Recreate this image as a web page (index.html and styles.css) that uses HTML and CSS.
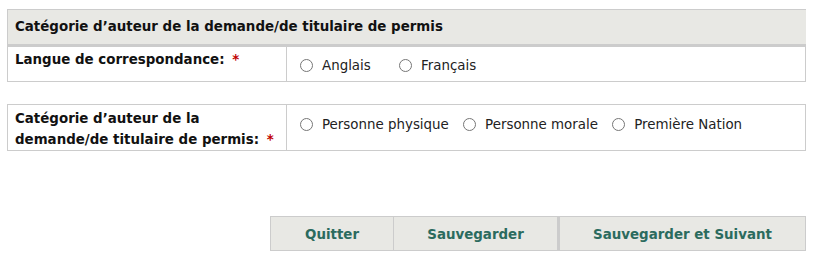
FILE: index.html
```html
<!DOCTYPE html>
<html lang="fr">
<head>
  <meta charset="UTF-8" />
  <title>Catégorie d’auteur de la demande</title>
  <link rel="stylesheet" href="styles.css">
</head>
<body>

  <div class="section-header">Catégorie d’auteur de la demande/de titulaire de permis</div>

  <table class="form-table">
    <tr class="row-lang">
      <td class="label">Langue de correspondance: <span class="req">*</span></td>
      <td class="field field-mid">
        <label class="opt"><input type="radio" name="langue"> Anglais</label>
        <label class="opt"><input type="radio" name="langue"> Français</label>
      </td>
    </tr>
  </table>

  <table class="form-table second">
    <tr class="row-cat">
      <td class="label">Catégorie d’auteur de la demande/de titulaire de permis: <span class="req">*</span></td>
      <td class="field">
        <label class="opt tight"><input type="radio" name="cat"> Personne physique</label>
        <label class="opt tight"><input type="radio" name="cat"> Personne morale</label>
        <label class="opt tight"><input type="radio" name="cat"> Première Nation</label>
      </td>
    </tr>
  </table>

  <div class="actions">
    <button class="btn btn-quit">Quitter</button>
    <button class="btn btn-save">Sauvegarder</button>
    <button class="btn btn-next">Sauvegarder et Suivant</button>
  </div>

</body>
</html>
```

FILE: styles.css
```css
body {
  margin: 9px 8px 8px 7px;
  font-family: 'DejaVu Sans', Verdana, sans-serif;
  font-size: 13.4px;
  color: #111;
  background: #fff;
}

.section-header {
  width: 784px;
  height: 34px;
  line-height: 34px;
  padding: 0 7px;
  background: #e8e8e4;
  border: 1px solid #ccc;
  border-bottom: 3px solid #ccc;
  font-weight: bold;
}

.form-table {
  width: 799px;
  border-collapse: collapse;
  border: 1px solid #ccc;
  border-top: none;
}

.form-table.second {
  margin-top: 22px;
  border-top: 1px solid #ccc;
}

.row-lang {
  height: 34px;
}

.row-cat {
  height: 46px;
}

.form-table td {
  vertical-align: top;
  padding: 2px 7px 0;
}

.label {
  width: 264px;
  font-weight: bold;
  line-height: 21px;
  border-right: 1px solid #ccc;
}

.row-cat .label {
  padding-top: 3px;
}

.req {
  color: #c00000;
  margin-left: 3px;
}

.field {
  padding-left: 13px !important;
}

.field-mid {
  vertical-align: middle !important;
  padding-top: 6px !important;
}

.row-cat .field {
  padding-top: 12px !important;
}

.opt {
  display: inline-flex;
  align-items: center;
  margin-right: 24px;
  color: #222;
}

.opt.tight {
  margin-right: 10px;
}

.opt input {
  margin: 0 9px 0 0;
  width: 13px;
  height: 13px;
}

.actions {
  display: flex;
  justify-content: flex-end;
  width: 799px;
  margin-top: 65px;
}

.btn {
  height: 35px;
  padding: 2px 0 0;
  background: #e8e8e4;
  border: 1px solid #ccc;
  font-family: inherit;
  font-size: 13.4px;
  font-weight: bold;
  color: #2b6b5e;
}

.btn + .btn {
  border-left-width: 0;
}

.btn-quit {
  width: 124px;
}

.btn-save {
  width: 164px;
}

.btn-next {
  width: 248px;
  border-left: 2px solid #ccc !important;
}
```
